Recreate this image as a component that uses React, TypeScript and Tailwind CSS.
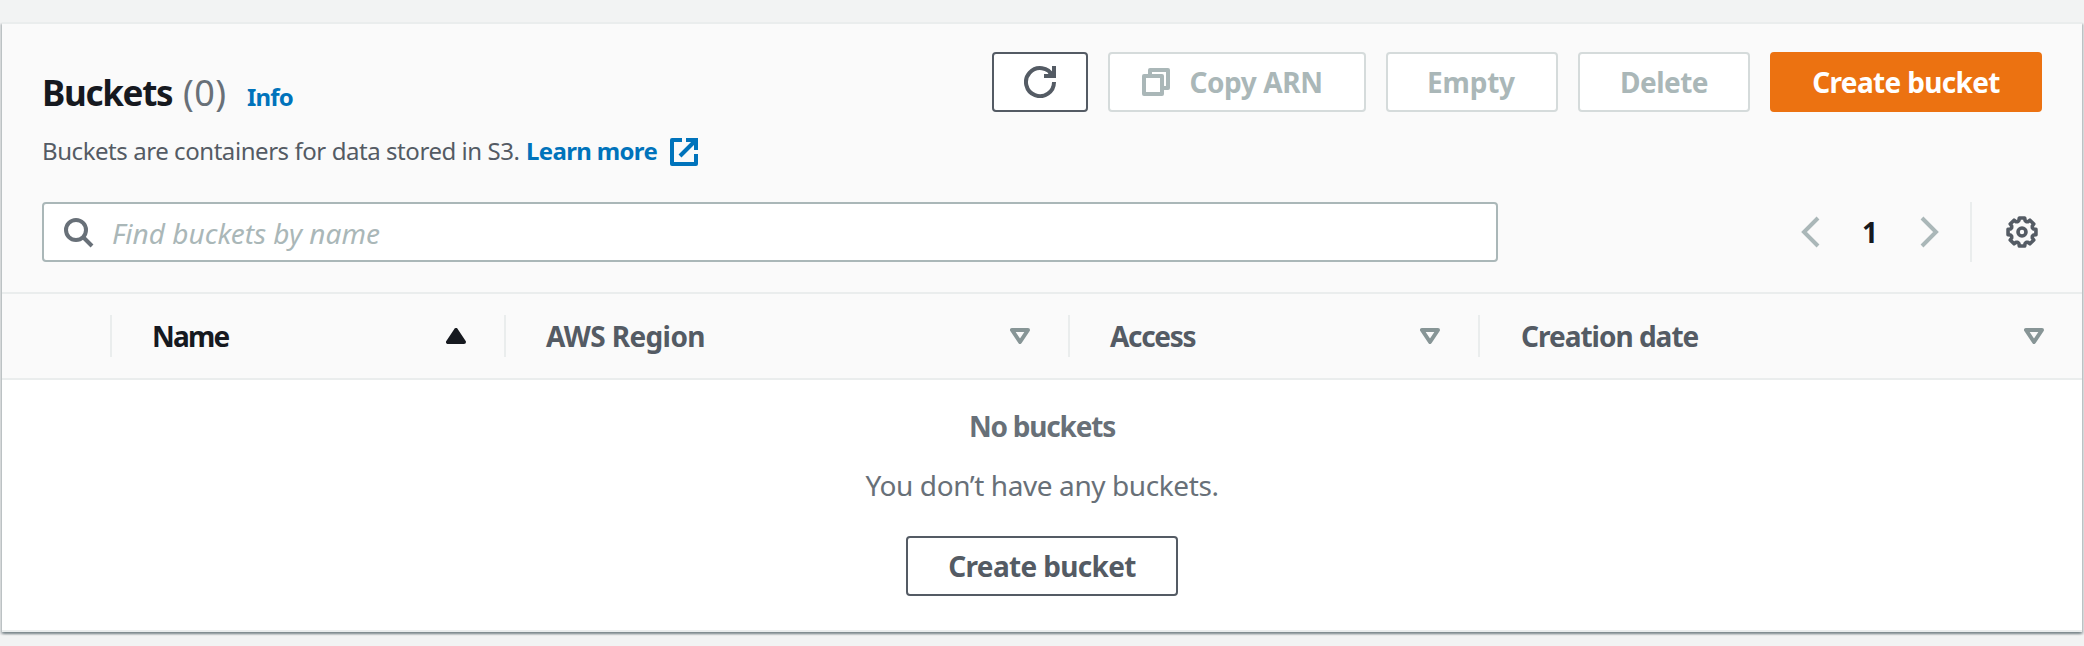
import type { ReactNode } from 'react';

const GEAR_POINTS = Array.from({ length: 8 }, (_, i) => {
  const base = i * 45 - 90;
  return [
    [-22.5, 11.2],
    [-15, 11.9],
    [-11, 14.2],
    [11, 14.2],
    [15, 11.9],
  ]
    .map(([offset, radius]) => {
      const angle = ((base + offset) * Math.PI) / 180;
      return `${(16 + radius * Math.cos(angle)).toFixed(2)},${(16 + radius * Math.sin(angle)).toFixed(2)}`;
    })
    .join(' ');
}).join(' ');

function Icon({ children }: { children: ReactNode }) {
  return (
    <svg viewBox="0 0 16 16" className="size-8 shrink-0" fill="none" stroke="currentColor" strokeWidth="2">
      {children}
    </svg>
  );
}

function RefreshIcon() {
  return (
    <Icon>
      <path d="M10 5h5V0" />
      <path d="M15 8a7 7 0 1 1-.7-3" />
      <path d="M12.6 3.2 15 5" />
    </Icon>
  );
}

function CopyIcon() {
  return (
    <Icon>
      <path strokeLinejoin="round" d="M2 5h9v9H2z" />
      <path strokeLinejoin="round" d="M5 5V2h9v9h-3" />
    </Icon>
  );
}

function ExternalIcon() {
  return (
    <Icon>
      <path d="M9 2h5v5" />
      <path d="m6 10 8-8" />
      <path strokeLinejoin="round" d="M14 9v5H2V2h5" />
    </Icon>
  );
}

function SearchIcon() {
  return (
    <Icon>
      <circle cx="7" cy="7" r="5" />
      <path d="m15 15-4.5-4.5" />
    </Icon>
  );
}

function GearIcon() {
  return (
    <svg viewBox="0 0 32 32" className="size-8 shrink-0" fill="none" stroke="currentColor" strokeWidth="3.6">
      <polygon points={GEAR_POINTS} strokeLinejoin="round" />
      <circle cx="16" cy="16" r="4" />
    </svg>
  );
}

function Chevron({ d }: { d: string }) {
  return (
    <svg viewBox="0 0 20 32" className="h-8 w-5 shrink-0" fill="none" stroke="currentColor" strokeWidth="4">
      <path d={d} />
    </svg>
  );
}

function SortIcon({ active }: { active?: boolean }) {
  return (
    <svg viewBox="0 0 20 16" className="h-4 w-5 shrink-0" strokeLinejoin="round" strokeWidth="4">
      {active ? (
        <path d="M2 14h16L10 2z" fill="#16191f" stroke="#16191f" />
      ) : (
        <path d="M2 2h16l-8 12z" fill="none" stroke="#879596" />
      )}
    </svg>
  );
}

function Button({ className, children }: { className: string; children: ReactNode }) {
  return (
    <button
      type="button"
      className={`flex h-[60px] shrink-0 items-center justify-center rounded-[4px] border-2 pb-px text-[28px] font-bold whitespace-nowrap ${className}`}
    >
      {children}
    </button>
  );
}

function Column({ label, className, active }: { label: string; className: string; active?: boolean }) {
  return (
    <div className={`flex h-[84px] items-center justify-between text-[28px] font-bold ${className}`}>
      <span>{label}</span>
      <SortIcon active={active} />
    </div>
  );
}

function Divider() {
  return <div className="h-[42px] w-[2px] bg-[#eaeded]" />;
}

export default function App() {
  return (
    <div className="h-[646px] w-[2084px] overflow-hidden bg-[#f2f3f3] px-[2px] pt-[22px] font-['Noto_Sans',sans-serif] text-[#545b64]">
      <section className="h-[610px] border-y-2 border-[#eaeded] bg-white shadow-[0_2px_2px_0_rgba(0,28,36,0.3),2px_2px_2px_0_rgba(0,28,36,0.15),-2px_2px_2px_0_rgba(0,28,36,0.15)]">
        <header className="h-[270px] border-b-2 border-[#eaeded] bg-[#fafafa] px-10 pt-7">
          <div className="flex h-[115px] items-start justify-between">
            <div className="pt-[19px]">
              <div className="flex h-11 items-baseline leading-[44px] whitespace-nowrap">
                <h1 className="w-[141px] text-[35px] font-bold tracking-[-1.3px] text-[#16191f]">Buckets</h1>
                <span className="w-[64px] text-[36px] tracking-[0.4px] text-[#687078]">(0)</span>
                <a className="text-[24px] font-bold tracking-[-0.8px] text-[#0073bb]">Info</a>
              </div>
              <div className="mt-[20px] flex h-8 items-center text-[24px] leading-8 whitespace-nowrap">
                <p className="w-[484px] tracking-[-0.44px]">Buckets are containers for data stored in S3.</p>
                <a className="flex items-center font-bold text-[#0073bb]">
                  <span className="w-[142px] tracking-[-0.66px]">Learn more</span>
                  <span className="pt-[2px]">
                    <ExternalIcon />
                  </span>
                </a>
              </div>
            </div>
            <div className="flex gap-5">
              <Button className="w-24 border-[#545b64] bg-white">
                <RefreshIcon />
              </Button>
              <Button className="w-[258px] gap-[17px] border-[#d5dbdb] bg-white pr-[11px] tracking-[-0.4px] text-[#aab7b8]">
                <CopyIcon />
                Copy ARN
              </Button>
              <Button className="w-[172px] border-[#d5dbdb] bg-white pr-[2px] tracking-[-0.2px] text-[#aab7b8]">
                Empty
              </Button>
              <Button className="w-[172px] border-[#d5dbdb] bg-white tracking-[-0.5px] text-[#aab7b8]">Delete</Button>
              <Button className="w-[272px] border-[#ec7211] bg-[#ec7211] tracking-[-0.66px] text-white">
                Create bucket
              </Button>
            </div>
          </div>
          <div className="mt-[35px] flex h-[60px] items-center justify-between">
            <div className="flex h-[60px] w-[1456px] items-center rounded-[4px] border-2 border-[#aab7b8] bg-white pl-[18px] text-[#687078]">
              <SearchIcon />
              <span className="pt-px pl-[18px] text-[28px] text-[#aab7b8] italic">Find buckets by name</span>
            </div>
            <div className="flex items-center pr-1 text-[#aab7b8]">
              <Chevron d="M18 2 4 16l14 14" />
              <span className="w-[100px] pb-px text-center text-[28px] font-bold text-[#16191f]">1</span>
              <Chevron d="m2 2 14 14L2 30" />
              <div className="ml-[30px] h-[60px] w-[2px] bg-[#eaeded]" />
              <span className="ml-[34px] text-[#545b64]">
                <GearIcon />
              </span>
            </div>
          </div>
        </header>
        <div className="flex h-[86px] items-center border-b-2 border-[#eaeded] bg-[#fafafa]">
          <div className="w-[108px]" />
          <Divider />
          <Column label="Name" active className="w-[392px] pr-[38px] pl-10 tracking-[-1.8px] text-[#16191f]" />
          <Divider />
          <Column label="AWS Region" className="w-[562px] pr-[38px] pl-10 tracking-[-0.6px]" />
          <Divider />
          <Column label="Access" className="w-[408px] pr-[38px] pl-10 tracking-[-1.3px]" />
          <Divider />
          <Column label="Creation date" className="w-[602px] pr-[38px] pl-[41px] tracking-[-1px]" />
        </div>
        <div className="flex flex-col items-center pt-[25px] text-[28px] leading-10 text-[#687078]">
          <p className="pt-px font-bold tracking-[-1.2px]">No buckets</p>
          <p className="mt-[19px] mb-[31px] tracking-[-0.41px]">You don’t have any buckets.</p>
          <Button className="w-[272px] border-[#545b64] bg-white tracking-[-0.66px] text-[#545b64]">
            Create bucket
          </Button>
        </div>
      </section>
    </div>
  );
}
